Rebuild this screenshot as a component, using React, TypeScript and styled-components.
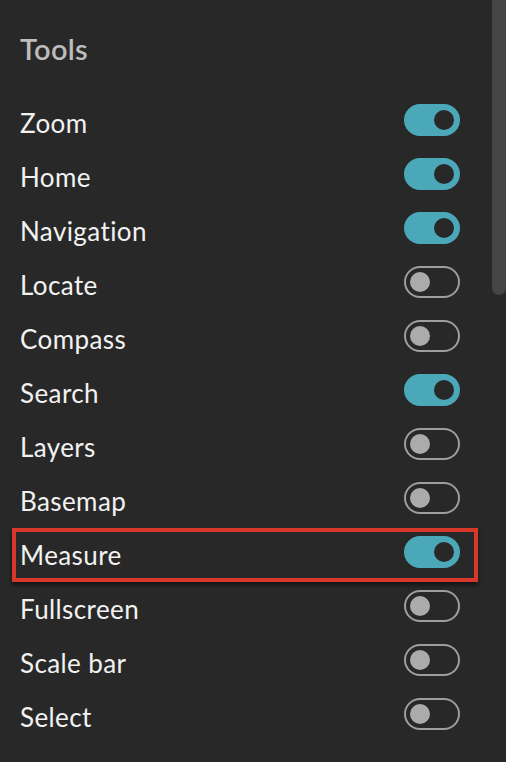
import React from 'react';
import styled, { createGlobalStyle } from 'styled-components';

const GlobalStyle = createGlobalStyle`
  html, body {
    margin: 0;
    padding: 0;
    background: #282828;
  }
  body {
    font-family: Lato, "Open Sans", sans-serif;
  }
`;

const Page = styled.div`
  display: flex;
  width: 506px;
  height: 762px;
  overflow: hidden;
  background: #282828;
`;

const Panel = styled.div`
  flex: 1;
  padding: 28px 32px 0 20px;
`;

const Title = styled.h2`
  margin: 0 0 23px;
  font-size: 29px;
  font-weight: 600;
  letter-spacing: 0.3px;
  line-height: 42px;
  color: #bdbdbd;
`;

const List = styled.ul`
  list-style: none;
  margin: 0;
  padding: 0;
`;

const Row = styled.li<{ $highlighted?: boolean }>`
  position: relative;
  display: flex;
  align-items: center;
  justify-content: space-between;
  height: 54px;

  ${({ $highlighted }) => $highlighted && `
    &::after {
      content: '';
      position: absolute;
      top: 3px;
      bottom: -3px;
      left: -8px;
      right: -18px;
      border: 4px solid #d6382a;
      box-shadow: 0 3px 4px rgba(0, 0, 0, 0.55);
      pointer-events: none;
    }
  `}
`;

const Label = styled.span`
  font-size: 26px;
  letter-spacing: 0.4px;
  color: #f2f2f2;
  line-height: 1;
  padding-top: 5px;
`;

const Switch = styled.span<{ $on: boolean }>`
  position: relative;
  display: inline-block;
  box-sizing: border-box;
  width: 56px;
  height: 32px;
  border-radius: 16px;
  background: ${({ $on }) => ($on ? '#4aa8b9' : 'transparent')};
  border: 2px solid ${({ $on }) => ($on ? '#4aa8b9' : '#9e9e9e')};

  &::before {
    content: '';
    position: absolute;
    top: 4px;
    left: ${({ $on }) => ($on ? '28px' : '4px')};
    width: 20px;
    height: 20px;
    border-radius: 50%;
    background: ${({ $on }) => ($on ? '#282828' : '#ababab')};
  }
`;

const ScrollTrack = styled.div`
  width: 14px;
  flex-shrink: 0;
`;

const ScrollThumb = styled.div`
  height: 295px;
  background: #454545;
  border-radius: 0 0 7px 7px;
`;

const tools = [
  { name: 'Zoom', on: true },
  { name: 'Home', on: true },
  { name: 'Navigation', on: true },
  { name: 'Locate', on: false },
  { name: 'Compass', on: false },
  { name: 'Search', on: true },
  { name: 'Layers', on: false },
  { name: 'Basemap', on: false },
  { name: 'Measure', on: true, highlighted: true },
  { name: 'Fullscreen', on: false },
  { name: 'Scale bar', on: false },
  { name: 'Select', on: false },
];

export default function App() {
  return (
    <Page>
      <GlobalStyle />
      <Panel>
        <Title>Tools</Title>
        <List>
          {tools.map((tool) => (
            <Row key={tool.name} $highlighted={tool.highlighted}>
              <Label>{tool.name}</Label>
              <Switch $on={tool.on} />
            </Row>
          ))}
        </List>
      </Panel>
      <ScrollTrack>
        <ScrollThumb />
      </ScrollTrack>
    </Page>
  );
}
